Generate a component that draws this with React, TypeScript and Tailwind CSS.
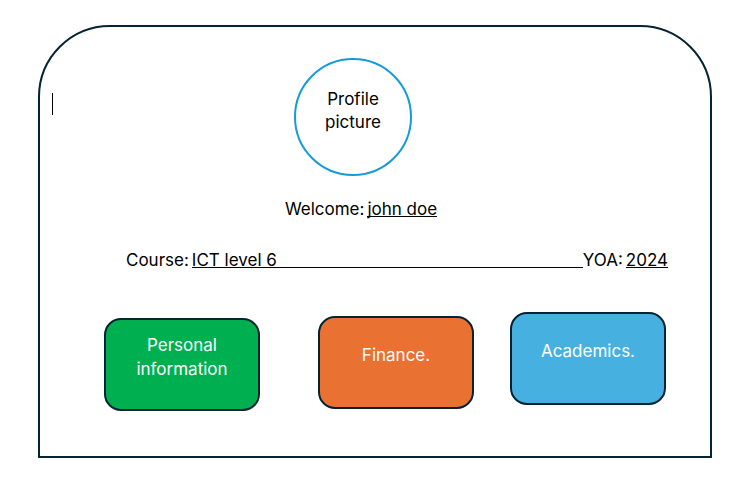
const tile =
  "h-[93px] w-[156px] shrink-0 rounded-[17px] border-2 border-[#042433] px-4 pb-4 text-center leading-6 text-white";

export default function App() {
  return (
    <main className="min-h-screen bg-white pt-[25px] pr-[26px] pb-[21px] pl-[38px] font-['Inter','Liberation_Sans',sans-serif] text-[17px] text-black">
      <section className="relative rounded-t-[72px] border-2 border-[#042433] pt-[31px] pb-[45px]">
        <span aria-hidden="true" className="absolute top-[66px] left-3 h-[22px] w-px bg-black" />
        <div className="flex justify-center pr-11">
          <div className="flex size-[118px] justify-center rounded-full border-2 border-[#159bd7] pt-7 text-center leading-[23px]">
            <p>
              Profile
              <br />
              picture
            </p>
          </div>
        </div>
        <h1 className="mt-[26px] flex justify-center gap-[3px] pr-7 leading-[14px]">
          <span>Welcome:</span>
          <span className="border-b border-black">john doe</span>
        </h1>
        <div className="mt-9 flex pr-[42px] pl-[86px] leading-[14px]">
          <span className="mr-[3px]">Course:</span>
          <span className="flex-1 border-b border-black">ICT level 6</span>
          <span className="mr-[3px]">YOA:</span>
          <span className="border-b border-black">2024</span>
        </div>
        <nav aria-label="Sections" className="mt-11 flex items-start justify-center pl-5">
          <button type="button" className={`${tile} mt-1.5 bg-[#00b050]`}>
            Personal information
          </button>
          <button type="button" className={`${tile} mt-1 ml-[58px] bg-[#e97132]`}>
            Finance.
          </button>
          <button type="button" className={`${tile} ml-9 bg-[#46b1e1]`}>
            Academics.
          </button>
        </nav>
      </section>
    </main>
  );
}
